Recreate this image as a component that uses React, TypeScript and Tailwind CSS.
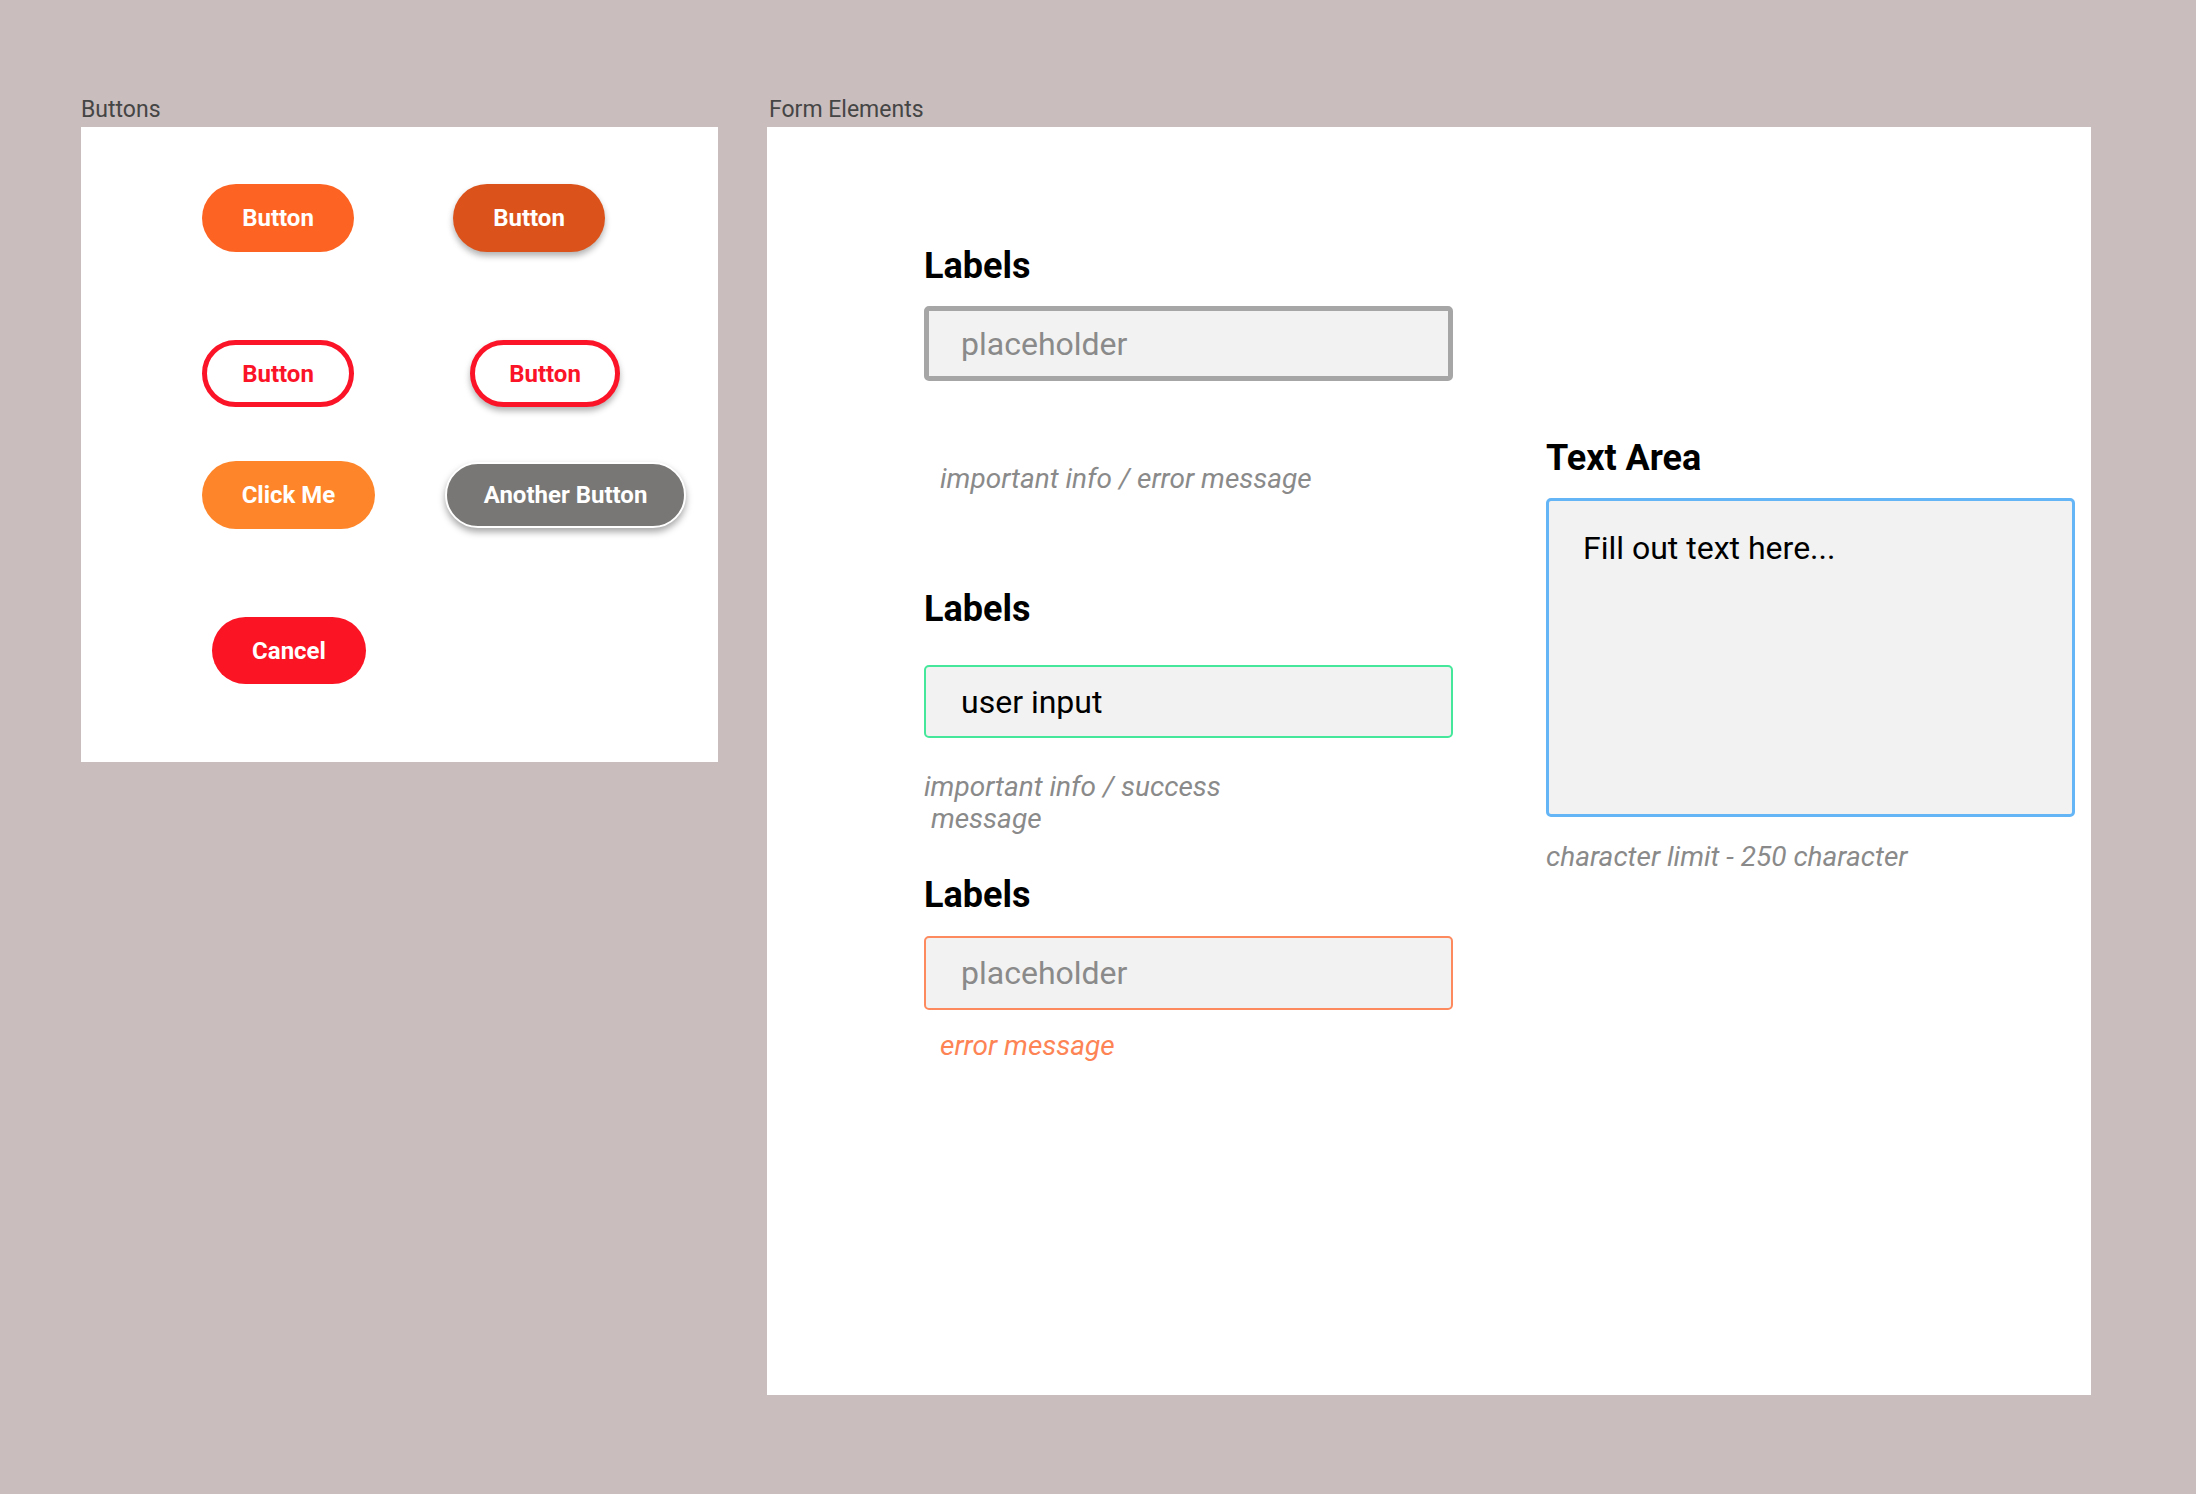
import React from "react"

// Style-guide board: a buttons swatch and a form-elements swatch on a warm grey canvas.

const pill = "flex shrink-0 items-center justify-center rounded-full text-[24px] font-bold leading-none"

function Buttons() {
  return (
    <section className="flex w-[637px] flex-col">
      <h2 className="mb-[4px] text-[23px] leading-[26px] text-[#454545]">Buttons</h2>
      <div className="flex h-[635px] flex-col bg-white">
        <div className="mt-[57px] flex pl-[121px] gap-[99px]">
          <button className={`${pill} h-[68px] w-[152px] bg-[#fd6322] text-white`}>Button</button>
          <button className={`${pill} h-[68px] w-[152px] bg-[#db531b] text-white shadow-[0_4px_6px_rgba(0,0,0,0.3)]`}>
            Button
          </button>
        </div>
        <div className="mt-[88px] flex pl-[121px] gap-[116px]">
          <button className={`${pill} h-[67px] w-[152px] border-[5px] border-[#fb1427] bg-white text-[#fb1427]`}>
            Button
          </button>
          <button
            className={`${pill} h-[67px] w-[150px] border-[5px] border-[#fb1427] bg-white text-[#fb1427] shadow-[0_4px_6px_rgba(0,0,0,0.3)]`}
          >
            Button
          </button>
        </div>
        <div className="mt-[54px] flex items-center pl-[121px] gap-[70px]">
          <button className={`${pill} h-[68px] w-[173px] bg-[#fe8529] text-white`}>Click Me</button>
          <button
            className={`${pill} h-[66px] w-[241px] border-2 border-white bg-[#787775] text-white shadow-[0_4px_7px_rgba(0,0,0,0.35)]`}
          >
            Another Button
          </button>
        </div>
        <div className="mt-[88px] flex pl-[131px]">
          <button className={`${pill} h-[67px] w-[154px] bg-[#fb1424] text-white`}>Cancel</button>
        </div>
      </div>
    </section>
  )
}

const heading = "text-[36px] font-bold leading-[40px] text-black"
const hint = "text-[28px] italic leading-[32px] text-[#8a8a8a]"
const field =
  "box-border w-[529px] rounded-[5px] bg-[#f2f2f2] pl-[32px] text-[32px] text-black outline-none placeholder:text-[#8a8a8a]"

function FormElements() {
  return (
    <section className="flex w-[1324px] flex-col">
      <h2 className="mb-[4px] pl-[2px] text-[23px] leading-[26px] text-[#454545]">Form Elements</h2>
      <div className="flex h-[1268px] bg-white pl-[157px]">
        <div className="flex w-[529px] flex-col">
          <h3 className={`mt-[119px] ${heading}`}>Labels</h3>
          <input className={`mt-[20px] h-[75px] border-[5px] border-[#a6a6a6] ${field}`} placeholder="placeholder" />
          <p className={`mt-[82px] pl-[16px] ${hint}`}>important info / error message</p>

          <h3 className={`mt-[94px] ${heading}`}>Labels</h3>
          <input className={`mt-[36px] h-[73px] border-2 border-[#45e89a] pl-[35px] ${field}`} defaultValue="user input" />
          <p className={`mt-[33px] whitespace-pre-line leading-[31px] ${hint}`}>
            {"important info / success\n\u00a0message"}
          </p>

          <h3 className={`mt-[40px] ${heading}`}>Labels</h3>
          <input className={`mt-[21px] h-[74px] border-2 border-[#fd8a5e] pl-[35px] ${field}`} placeholder="placeholder" />
          <p className="mt-[20px] pl-[16px] text-[28px] italic leading-[32px] text-[#fd8455]">error message</p>
        </div>

        <div className="ml-[93px] flex w-[529px] flex-col">
          <h3 className={`mt-[311px] ${heading}`}>Text Area</h3>
          <textarea
            className="mt-[20px] box-border h-[319px] w-[529px] resize-none rounded-[5px] border-[3px] border-[#64b5f6] bg-[#f2f2f2] px-[34px] pt-[28px] text-[32px] leading-[38px] text-black outline-none"
            defaultValue="Fill out text here..."
          />
          <p className={`mt-[24px] ${hint}`}>character limit - 250 character</p>
        </div>
      </div>
    </section>
  )
}

export default function App() {
  return (
    <div className="flex h-[1494px] w-[2196px] gap-[49px] bg-[#c9bdbd] pl-[81px] pt-[97px] font-['Roboto',sans-serif]">
      <Buttons />
      <FormElements />
    </div>
  )
}
